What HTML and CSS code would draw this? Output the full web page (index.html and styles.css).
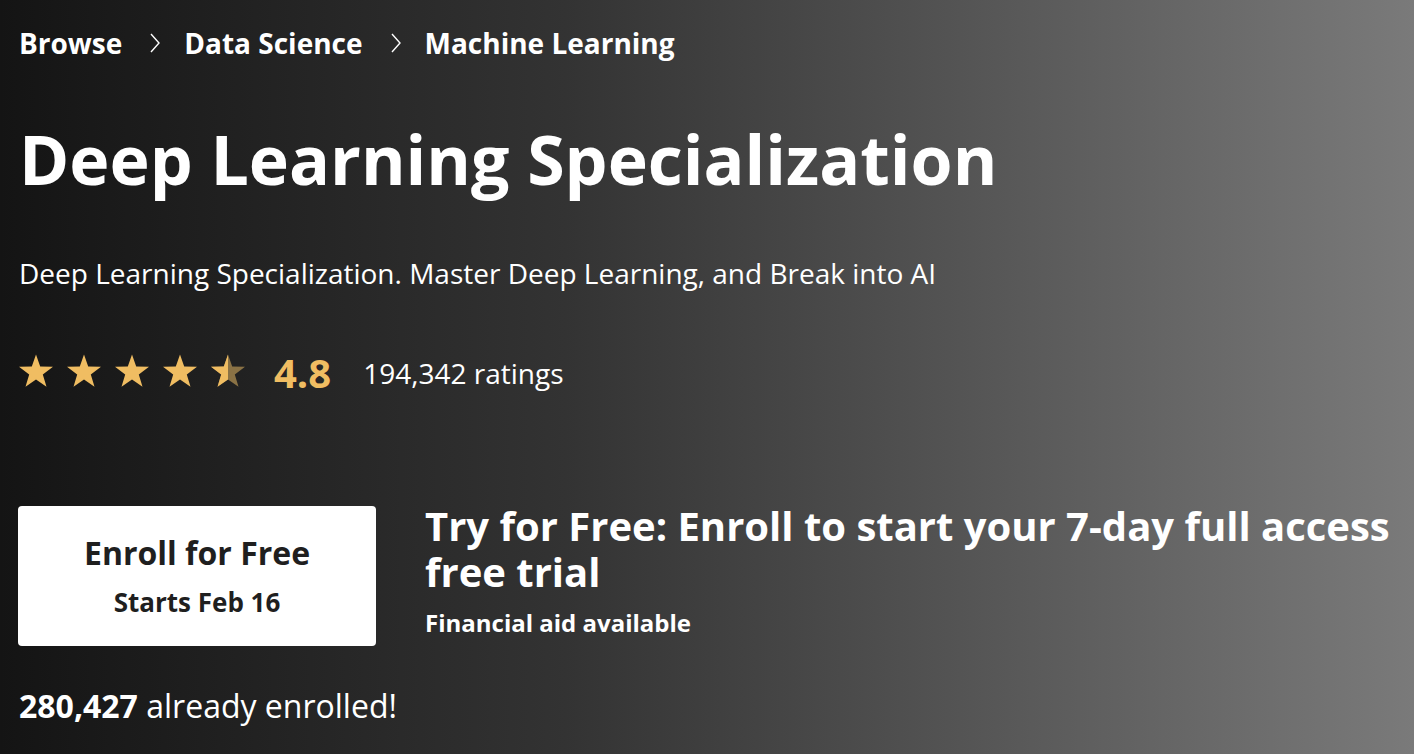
FILE: index.html
```html
<!DOCTYPE html>
<html lang="en">
<head>
<meta charset="utf-8">
<title>Deep Learning Specialization</title>
<link rel="stylesheet" href="styles.css">
</head>
<body>
<div class="hero">
  <nav class="crumbs">
    <a class="crumb">Browse</a>
    <svg class="chev" viewBox="0 0 12 20" width="12" height="20"><path d="M2 1 L10 10 L2 19" fill="none" stroke="#fff" stroke-width="1.4"/></svg>
    <a class="crumb">Data Science</a>
    <svg class="chev" viewBox="0 0 12 20" width="12" height="20"><path d="M2 1 L10 10 L2 19" fill="none" stroke="#fff" stroke-width="1.4"/></svg>
    <a class="crumb">Machine Learning</a>
  </nav>
  <h1 class="title">Deep Learning Specialization</h1>
  <p class="subtitle">Deep Learning Specialization. Master Deep Learning, and Break into AI</p>
  <div class="rating">
    <div class="stars">
      <svg class="star" viewBox="0 0 36 36" width="36" height="36"><path d="M18 1.5 L22.2 13.6 L35 13.8 L24.8 21.5 L28.5 33.8 L18 26.5 L7.5 33.8 L11.2 21.5 L1 13.8 L13.8 13.6 Z" fill="#f0bd62"/></svg>
      <svg class="star" viewBox="0 0 36 36" width="36" height="36"><path d="M18 1.5 L22.2 13.6 L35 13.8 L24.8 21.5 L28.5 33.8 L18 26.5 L7.5 33.8 L11.2 21.5 L1 13.8 L13.8 13.6 Z" fill="#f0bd62"/></svg>
      <svg class="star" viewBox="0 0 36 36" width="36" height="36"><path d="M18 1.5 L22.2 13.6 L35 13.8 L24.8 21.5 L28.5 33.8 L18 26.5 L7.5 33.8 L11.2 21.5 L1 13.8 L13.8 13.6 Z" fill="#f0bd62"/></svg>
      <svg class="star" viewBox="0 0 36 36" width="36" height="36"><path d="M18 1.5 L22.2 13.6 L35 13.8 L24.8 21.5 L28.5 33.8 L18 26.5 L7.5 33.8 L11.2 21.5 L1 13.8 L13.8 13.6 Z" fill="#f0bd62"/></svg>
      <svg class="star" viewBox="0 0 36 36" width="36" height="36"><path d="M18 1.5 L22.2 13.6 L35 13.8 L24.8 21.5 L28.5 33.8 L18 26.5 L7.5 33.8 L11.2 21.5 L1 13.8 L13.8 13.6 Z" fill="#8a7245"/><path d="M18 1.5 L18 26.5 L7.5 33.8 L11.2 21.5 L1 13.8 L13.8 13.6 Z" fill="#f0bd62"/></svg>
    </div>
    <span class="score">4.8</span>
    <span class="count">194,342 ratings</span>
  </div>
  <div class="cta">
    <button class="enroll">
      <span class="enroll-main">Enroll for Free</span>
      <span class="enroll-sub">Starts Feb 16</span>
    </button>
    <div class="trial">
      <div class="trial-head">Try for Free: Enroll to start your 7-day full access free trial</div>
      <div class="trial-aid">Financial aid available</div>
    </div>
  </div>
  <p class="enrolled"><strong>280,427</strong> already enrolled!</p>
</div>
</body>
</html>
```

FILE: styles.css
```css
html, body {
  margin: 0;
  padding: 0;
  height: 100%;
}
body {
  font-family: "Open Sans", "Noto Sans", sans-serif;
  color: #fff;
  background: linear-gradient(90deg, #141414 0%, #333 40%, #7a7a7a 100%);
  overflow: hidden;
}
.hero {
  padding: 24px 18px 0 19px;
}
.crumbs {
  display: flex;
  align-items: center;
  height: 38px;
}
.crumb {
  font-size: 28px;
  line-height: 38px;
  font-weight: 700;
  color: #fff;
}
.chev {
  margin: 0 23px 0 27px;
}
.title {
  margin: 57px 0 0 0;
  font-size: 68px;
  line-height: 80px;
  font-weight: 700;
}
.subtitle {
  margin: 55px 0 0 0;
  font-size: 28px;
  line-height: 38px;
}
.rating {
  display: flex;
  align-items: center;
  margin-top: 61px;
  height: 40px;
}
.stars {
  display: flex;
  gap: 12px;
  margin-left: -1px;
  margin-bottom: 4px;
}
.star {
  display: block;
}
.score {
  margin-left: 28px;
  font-size: 40px;
  line-height: 40px;
  font-weight: 700;
  color: #f0bd62;
}
.count {
  margin-left: 32px;
  font-size: 28px;
  line-height: 38px;
}
.cta {
  display: flex;
  margin-top: 113px;
  margin-left: -1px;
}
.enroll {
  width: 358px;
  height: 140px;
  padding: 0;
  border: 0;
  border-radius: 4px;
  background: #fff;
  color: #1f1f1f;
  font-family: inherit;
  display: flex;
  flex-direction: column;
  align-items: center;
  justify-content: center;
  gap: 12px;
  flex-shrink: 0;
}
.enroll-main {
  font-size: 32px;
  font-weight: 700;
  line-height: 40px;
}
.enroll-sub {
  font-size: 26px;
  font-weight: 700;
  line-height: 34px;
}
.trial {
  margin-left: 49px;
  margin-top: -3px;
}
.trial-head {
  font-size: 40px;
  font-weight: 700;
  line-height: 46px;
}
.trial-aid {
  margin-top: 12px;
  font-size: 24px;
  font-weight: 700;
  line-height: 32px;
}
.enrolled {
  margin: 39px 0 0 0;
  font-size: 32px;
  line-height: 42px;
}
.enrolled strong {
  font-weight: 700;
}
```
